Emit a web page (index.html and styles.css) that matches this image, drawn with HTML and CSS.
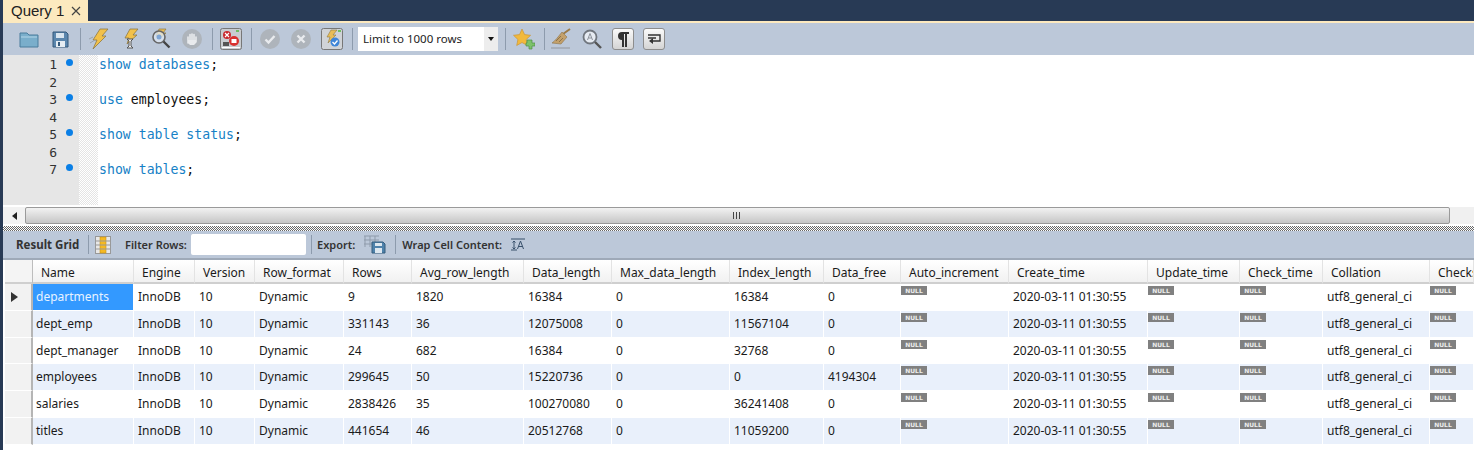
FILE: index.html
```html
<!DOCTYPE html>
<html lang="en">
<head>
<meta charset="utf-8">
<title>Query 1</title>
<link rel="stylesheet" href="styles.css">
</head>
<body>
<div class="app">
  <div class="tabbar">
    <div class="tab"><span class="tab-title">Query 1</span><svg class="tab-x" width="10" height="10" viewBox="0 0 10 10"><path d="M1 1l8 8M9 1l-8 8" stroke="#444" stroke-width="1.2" fill="none"/></svg></div>
  </div>
  <div class="accent"></div>

  <div class="toolbar">
    <div class="tgroup">
      <svg class="ico" viewBox="0 0 22 22"><path d="M2 5h7l2 2h9v12H2z" fill="#7aaecb" stroke="#4b7c9c"/><path d="M3 9h16" stroke="#b4d6e8"/></svg>
      <svg class="ico" viewBox="0 0 22 22"><path d="M4 4h13l2 2v13H4z" fill="#5b86ad" stroke="#34587a"/><rect x="7" y="5" width="8" height="5" fill="#d9e5ef"/><rect x="7" y="13" width="9" height="6" fill="#e6edf3"/><rect x="9" y="14" width="2" height="4" fill="#34587a"/></svg>
    </div>
    <i class="sep"></i>
    <div class="tgroup">
      <svg class="ico" viewBox="0 0 22 22"><path d="M12 1h8l-6 7h4L5 21l4-9H5z" fill="#f2c14a" stroke="#8f7a45" stroke-width=".8"/><path d="M2 15l5-3M1 11l4-2" stroke="#9aa3ad"/></svg>
      <svg class="ico" viewBox="0 0 22 22"><path d="M11 1h8l-5 6h4L8 16l2-6H6z" fill="#f2c14a" stroke="#8f7a45" stroke-width=".8"/><path d="M8 11h6l-2 2v5l2 2H8l2-2v-5z" fill="#f2f2f2" stroke="#555"/></svg>
      <svg class="ico" viewBox="0 0 22 22"><path d="M9 1h7l-3 4h3L9 11l1-3H6z" fill="#e9bd55" stroke="#8f7a45" stroke-width=".7"/><circle cx="9" cy="9" r="6" fill="#dfe8f2" fill-opacity=".75" stroke="#666" stroke-width="1.6"/><path d="M13.500 13.500l6 6" stroke="#444" stroke-width="2.400"/><circle cx="9" cy="9" r="2.500" fill="#7fa6d6"/></svg>
      <svg class="ico" viewBox="0 0 22 22"><circle cx="11" cy="11" r="10" fill="#aeb4bb"/><path d="M7 15V9M9 14V6.500M11 14V6M13 14V6.500M15 14V9" stroke="#e9ebee" stroke-width="1.600" stroke-linecap="round"/><path d="M7 12h8v3l-2 2H9l-2-2z" fill="#e9ebee"/></svg>
    </div>
    <i class="sep"></i>
    <svg class="ico" viewBox="0 0 22 22"><rect x=".5" y=".5" width="21" height="21" rx="2" fill="#c9ccd0" stroke="#777"/><circle cx="7" cy="7" r="4" fill="#c9282d"/><path d="M5 5l4 4M9 5l-4 4" stroke="#fff" stroke-width="1.200"/><circle cx="14" cy="13" r="5" fill="#d9312f"/><rect x="11.500" y="11" width="5" height="4" fill="#fff"/><path d="M3 14h6v4H3z" fill="#555"/><rect x="16" y="2" width="3" height="2" fill="#6fbe62"/><rect x="2" y="19" width="18" height="1" fill="#fff"/></svg>
    <i class="sep"></i>
    <div class="tgroup">
      <svg class="ico" viewBox="0 0 22 22"><circle cx="11" cy="11" r="10" fill="#aeb4bb"/><path d="M6.500 11.500l3 3 6-6.500" stroke="#e9ebee" stroke-width="2.400" fill="none"/></svg>
      <svg class="ico" viewBox="0 0 22 22"><circle cx="11" cy="11" r="10" fill="#aeb4bb"/><path d="M7.500 7.500l7 7M14.500 7.500l-7 7" stroke="#e9ebee" stroke-width="2.400"/></svg>
      <svg class="ico" viewBox="0 0 22 22"><rect x=".5" y=".5" width="21" height="21" rx="2" fill="#d0d3d7" stroke="#777"/><path d="M10 2h6l-4 5h3l-8 8 2-6H6z" fill="#e9bd55" stroke="#8f7a45" stroke-width=".6"/><circle cx="14" cy="14" r="4.500" fill="#3f86d8"/><path d="M11.500 14l2 2 3-3.500" stroke="#fff" stroke-width="1.300" fill="none"/><rect x="17" y="2" width="3" height="2" fill="#6fbe62"/></svg>
    </div>
    <i class="sep sep-tight"></i>
    <div class="limit"><span class="limit-text">Limit to 1000 rows</span><span class="limit-btn"><b class="caret"></b></span></div>
    <i class="sep sep-narrow"></i>
    <svg class="ico" viewBox="0 0 22 22"><path d="M9 1l2.600 5.600 6 .7-4.400 4.200 1.200 6L9 14.500 3.700 17.500l1.200-6L.5 7.300l6-.7z" fill="#f2b93b" stroke="#c8953a" stroke-width=".7"/><path d="M14 12h3v-0h2v3h3v3h-3v3h-3v-3h-3v-3h1z" fill="#7cc26c" stroke="#4f8f45" stroke-width=".7"/></svg>
    <i class="sep sep-tight"></i>
    <div class="tgroup">
      <svg class="ico" viewBox="0 0 22 22"><path d="M20 1l-7 5" stroke="#9c7a45" stroke-width="2"/><path d="M12 4l5 5-6 7-9-1c3-2 6-6 10-11z" fill="#c3a06a" stroke="#8d7349" stroke-width=".6"/><path d="M6 13l5-5M9 14l4-4" stroke="#8d7349"/><path d="M1 20h19" stroke="#a1a7b0" stroke-width="1.500"/></svg>
      <svg class="ico" viewBox="0 0 22 22"><circle cx="9" cy="9" r="6.500" fill="#e6ebf2" stroke="#70767e" stroke-width="1.800"/><path d="M14 14l6 6" stroke="#555" stroke-width="2.400"/><path d="M6.500 12L9 5.500l2.500 6.500M7.500 10h3" stroke="#8a9099" fill="none"/></svg>
      <span class="kbtn"><svg width="14" height="16" viewBox="0 0 14 16"><path d="M6 1h7v2h-2v13H9V3H8v13H6V9a4 4 0 0 1 0-8z" fill="#333"/></svg></span>
      <span class="kbtn"><svg width="14" height="12" viewBox="0 0 14 12"><path d="M1 2h12v6H5M1 5h8" stroke="#333" stroke-width="1.400" fill="none"/><path d="M6 5v6L2 8z" fill="#333"/></svg></span>
    </div>
  </div>

  <div class="editor">
    <div class="gutter">
      <div class="gline"><span class="num">1</span><i class="dot"></i></div>
      <div class="gline"><span class="num">2</span></div>
      <div class="gline"><span class="num">3</span><i class="dot"></i></div>
      <div class="gline"><span class="num">4</span></div>
      <div class="gline"><span class="num">5</span><i class="dot"></i></div>
      <div class="gline"><span class="num">6</span></div>
      <div class="gline"><span class="num">7</span><i class="dot"></i></div>
    </div>
    <div class="fold"></div>
    <div class="code">
      <div class="cline"><span class="kw">show databases</span>;</div>
      <div class="cline">&nbsp;</div>
      <div class="cline"><span class="kw">use</span> employees;</div>
      <div class="cline">&nbsp;</div>
      <div class="cline"><span class="kw">show table status</span>;</div>
      <div class="cline">&nbsp;</div>
      <div class="cline"><span class="kw">show tables</span>;</div>
    </div>
  </div>

  <div class="hscroll">
    <div class="arrow-box"><b class="arrow-left"></b></div>
    <div class="thumb"><span class="grip"></span></div>
  </div>
  <div class="splitter"></div>

  <div class="rtoolbar">
    <span class="rt-title">Result Grid</span>
    <i class="sep rt-sep1"></i>
    <svg class="rt-ico1" width="16" height="18" viewBox="0 0 16 18"><rect x=".5" y=".5" width="15" height="17" fill="#e8e8e8" stroke="#999"/><rect x="5" y="1" width="6" height="16" fill="#f5b921" stroke="#c68f17" stroke-width=".6"/><path d="M1 5h14M1 9h14M1 13h14" stroke="#999"/></svg>
    <span class="rt-label rt-filter">Filter Rows:</span>
    <span class="rt-input"></span>
    <i class="sep rt-sep2"></i>
    <span class="rt-label">Export:</span>
    <svg class="rt-ico2" width="22" height="19" viewBox="0 0 22 19"><path d="M0 1h15M0 5h15M0 9h15M1 1v11M6 1v11M11 1v11" stroke="#8f9bab" fill="none"/><path d="M8 7h11l2 2v9H8z" fill="#4f82ab" stroke="#345c7d"/><rect x="11" y="8" width="7" height="3" fill="#dde7ef"/><rect x="11" y="13" width="7" height="5" fill="#dde7ef"/></svg>
    <i class="sep rt-sep3"></i>
    <span class="rt-label">Wrap Cell Content:</span>
    <svg class="rt-ico3" width="14" height="13" viewBox="0 0 14 13"><path d="M0 1h14M0 12h6" stroke="#38506b"/><path d="M3 3v8M1.500 4.500L3 3l1.500 1.500M1.500 9.500L3 11l1.500-1.500" stroke="#38506b" fill="none"/><path d="M6.500 11L9.500 3l3 8M7.500 8.500h4" stroke="#38506b" fill="none"/></svg>
  </div>

  <div class="grid">
    <div class="hd hd-corner"></div><div class="hd">Name</div><div class="hd">Engine</div><div class="hd">Version</div><div class="hd">Row_format</div><div class="hd">Rows</div><div class="hd">Avg_row_length</div><div class="hd">Data_length</div><div class="hd">Max_data_length</div><div class="hd">Index_length</div><div class="hd">Data_free</div><div class="hd">Auto_increment</div><div class="hd">Create_time</div><div class="hd">Update_time</div><div class="hd">Check_time</div><div class="hd">Collation</div><div class="hd">Checks</div>

    <div class="rh"><b class="row-mark"></b></div><div class="c sel">departments</div><div class="c">InnoDB</div><div class="c">10</div><div class="c">Dynamic</div><div class="c">9</div><div class="c">1820</div><div class="c">16384</div><div class="c">0</div><div class="c">16384</div><div class="c">0</div><div class="c"><span class="null">NULL</span></div><div class="c">2020-03-11 01:30:55</div><div class="c"><span class="null">NULL</span></div><div class="c"><span class="null">NULL</span></div><div class="c">utf8_general_ci</div><div class="c"><span class="null">NULL</span></div>

    <div class="rh"></div><div class="c alt">dept_emp</div><div class="c alt">InnoDB</div><div class="c alt">10</div><div class="c alt">Dynamic</div><div class="c alt">331143</div><div class="c alt">36</div><div class="c alt">12075008</div><div class="c alt">0</div><div class="c alt">11567104</div><div class="c alt">0</div><div class="c alt"><span class="null">NULL</span></div><div class="c alt">2020-03-11 01:30:55</div><div class="c alt"><span class="null">NULL</span></div><div class="c alt"><span class="null">NULL</span></div><div class="c alt">utf8_general_ci</div><div class="c alt"><span class="null">NULL</span></div>

    <div class="rh"></div><div class="c">dept_manager</div><div class="c">InnoDB</div><div class="c">10</div><div class="c">Dynamic</div><div class="c">24</div><div class="c">682</div><div class="c">16384</div><div class="c">0</div><div class="c">32768</div><div class="c">0</div><div class="c"><span class="null">NULL</span></div><div class="c">2020-03-11 01:30:55</div><div class="c"><span class="null">NULL</span></div><div class="c"><span class="null">NULL</span></div><div class="c">utf8_general_ci</div><div class="c"><span class="null">NULL</span></div>

    <div class="rh"></div><div class="c alt">employees</div><div class="c alt">InnoDB</div><div class="c alt">10</div><div class="c alt">Dynamic</div><div class="c alt">299645</div><div class="c alt">50</div><div class="c alt">15220736</div><div class="c alt">0</div><div class="c alt">0</div><div class="c alt">4194304</div><div class="c alt"><span class="null">NULL</span></div><div class="c alt">2020-03-11 01:30:55</div><div class="c alt"><span class="null">NULL</span></div><div class="c alt"><span class="null">NULL</span></div><div class="c alt">utf8_general_ci</div><div class="c alt"><span class="null">NULL</span></div>

    <div class="rh"></div><div class="c">salaries</div><div class="c">InnoDB</div><div class="c">10</div><div class="c">Dynamic</div><div class="c">2838426</div><div class="c">35</div><div class="c">100270080</div><div class="c">0</div><div class="c">36241408</div><div class="c">0</div><div class="c"><span class="null">NULL</span></div><div class="c">2020-03-11 01:30:55</div><div class="c"><span class="null">NULL</span></div><div class="c"><span class="null">NULL</span></div><div class="c">utf8_general_ci</div><div class="c"><span class="null">NULL</span></div>

    <div class="rh"></div><div class="c alt">titles</div><div class="c alt">InnoDB</div><div class="c alt">10</div><div class="c alt">Dynamic</div><div class="c alt">441654</div><div class="c alt">46</div><div class="c alt">20512768</div><div class="c alt">0</div><div class="c alt">11059200</div><div class="c alt">0</div><div class="c alt"><span class="null">NULL</span></div><div class="c alt">2020-03-11 01:30:55</div><div class="c alt"><span class="null">NULL</span></div><div class="c alt"><span class="null">NULL</span></div><div class="c alt">utf8_general_ci</div><div class="c alt"><span class="null">NULL</span></div>
  </div>
</div>
</body>
</html>
```
FILE: styles.css
```css
* { box-sizing: border-box; }
html, body { margin: 0; padding: 0; background: #fff; }
body { width: 1474px; height: 450px; overflow: hidden; }
.app {
  height: 450px;
  border-left: 3px solid #283a55;
  font-family: "Noto Sans", "Open Sans", sans-serif;
  font-size: 12px;
  color: #1a1a1a;
  overflow: hidden;
}
.tabbar { height: 21px; background: #283a55; margin-left: -3px; padding-left: 3px; display: flex; }
.tab {
  width: 85px;
  background: #fce9bf;
  display: flex;
  align-items: center;
  padding-left: 8px;
}
.tab-title { font-size: 15px; font-family: "Liberation Sans", sans-serif; color: #222; width: 60px; white-space: nowrap; }
.accent { height: 2px; background: #fce9bf; }

.toolbar {
  height: 32px;
  background: #bcc8d9;
  display: flex;
  align-items: center;
  padding-left: 15px;
}
.tgroup { display: flex; align-items: center; gap: 9px; }
.ico { width: 22px; height: 22px; flex: none; }
.sep { display: block; width: 1px; height: 22px; background: #8d9bad; margin: 0 7px 0 9px; flex: none; }
.sep-narrow { margin-left: 7px; }
.sep-tight { margin-right: 5px; }
.limit { width: 140px; height: 24px; background: #fff; display: flex; flex: none; }
.limit-text { flex: 1; line-height: 24px; padding-left: 5px; color: #222; font-size: 11.500px; }
.limit-btn { width: 14px; background: #ededed; display: flex; align-items: center; justify-content: center; }
.caret { border: 3.500px solid transparent; border-top: 4px solid #111; border-bottom: 0; }
.kbtn {
  width: 22px; height: 22px;
  background: linear-gradient(#fafafa, #d4d4d4);
  border: 1px solid #8d8d8d;
  border-radius: 3px;
  display: flex; align-items: center; justify-content: center;
  flex: none;
}

.editor { height: 150px; display: flex; background: #fff; }
.gutter { width: 76px; background: #e6e6e6; flex: none; padding-top: 1px; }
.gline { height: 17.500px; display: flex; align-items: center; }
.num {
  width: 54px;
  text-align: right;
  font-family: "DejaVu Sans Mono", monospace;
  font-size: 13px;
  color: #333;
}
.dot { width: 7px; height: 7px; border-radius: 50%; background: #0a7fe6; margin-left: 9px; margin-top: -4px; }
.fold {
  width: 19px;
  flex: none;
  background-color: #fff;
  background-image: repeating-conic-gradient(#e4e4e4 0 25%, #fff 0 50%);
  background-size: 2px 2px;
}
.code {
  padding: 1px 0 0 1px;
  font-family: "DejaVu Sans Mono", monospace;
  font-size: 13.200px;
  color: #111;
}
.cline { height: 17.500px; line-height: 17.500px; white-space: pre; }
.kw { color: #1681c6; }

.hscroll { height: 17px; margin-top: 2px; display: flex; background: #f0f0f0; }
.arrow-box { width: 22px; display: flex; align-items: center; justify-content: center; background: #f2f2f2; flex: none; }
.arrow-left { border: 4px solid transparent; border-right: 5px solid #222; border-left: 0; }
.thumb {
  width: 1425px;
  border: 1px solid #9a9a9a;
  border-radius: 2px;
  background: linear-gradient(#f2f2f2, #dedede 45%, #c6c6c6);
  display: flex; align-items: center; justify-content: center;
  flex: none;
}
.grip { width: 9px; height: 7px; background: repeating-linear-gradient(90deg, #444 0 1px, transparent 1px 3px); }
.splitter {
  height: 5px;
  margin-top: 2px;
  background-image: repeating-conic-gradient(#666 0 25%, #fff 0 50%);
  background-size: 2px 2px;
}

.rtoolbar {
  height: 29px;
  background: #bcc8d9;
  border-bottom: 2px solid #9ea9b8;
  display: flex;
  align-items: center;
  padding-left: 4px;
  font-size: 11px;
  color: #333;
}
.rtoolbar .sep { height: 19px; margin: 0; }
.rt-title { font-weight: 700; font-size: 11.500px; margin-left: 9px; width: 72px; white-space: nowrap; }
.rt-ico1 { margin-left: 6px; flex: none; }
.rt-label { font-weight: 600; white-space: nowrap; }
.rt-filter { margin-left: 14px; width: 66px; }
.rt-input { width: 115px; height: 21px; background: #fff; border-radius: 2px; flex: none; }
.rt-sep2 { margin: 0 5px !important; }
.rt-ico2 { margin-left: 9px; flex: none; }
.rt-sep3 { margin: 0 6px 0 9px !important; }
.rt-ico3 { margin-left: 9px; flex: none; }

.grid {
  margin-left: 2px;
  display: grid;
  grid-template-columns: 28px 101px 61px 60px 89px 68px 112px 88px 118px 94px 77px 108px 139px 92px 83px 107px 44px;
  grid-template-rows: 24px repeat(6, 26.800px);
}
.hd {
  background: linear-gradient(#fff, #f1f1f1);
  border-right: 1px solid #e3e3e3;
  border-bottom: 2px solid #cfcfcf;
  padding-left: 8px;
  line-height: 25px;
  white-space: nowrap;
  overflow: hidden;
}
.hd-corner { background: #f4f4f4; border-right-color: #bdbdbd; }
.rh {
  background: #f2f2f2;
  border-right: 2px solid #b5b5b5;
  border-bottom: 1px solid #fff;
  display: flex; align-items: center; padding-left: 6px;
}
.row-mark { border: 5px solid transparent; border-left: 7px solid #333; border-right: 0; }
.c {
  border-right: 1px solid #fff;
  border-bottom: 1px solid #fff;
  padding-left: 4px;
  line-height: 25px;
  white-space: nowrap;
  overflow: hidden;
}
.sel, .c:nth-child(17n+2) { padding-left: 3px; }
.alt { background: #e9f0fb; }
.sel { background: #3399ff; color: #e8f3ff; }
.null {
  display: block;
  width: 26px;
  height: 9px;
  margin: 2px 0 0 -4px;
  background: #808080;
  color: #eee;
  font-family: "DejaVu Sans", sans-serif;
  font-size: 6px;
  font-weight: 700;
  line-height: 9px;
  text-align: center;
}
```
